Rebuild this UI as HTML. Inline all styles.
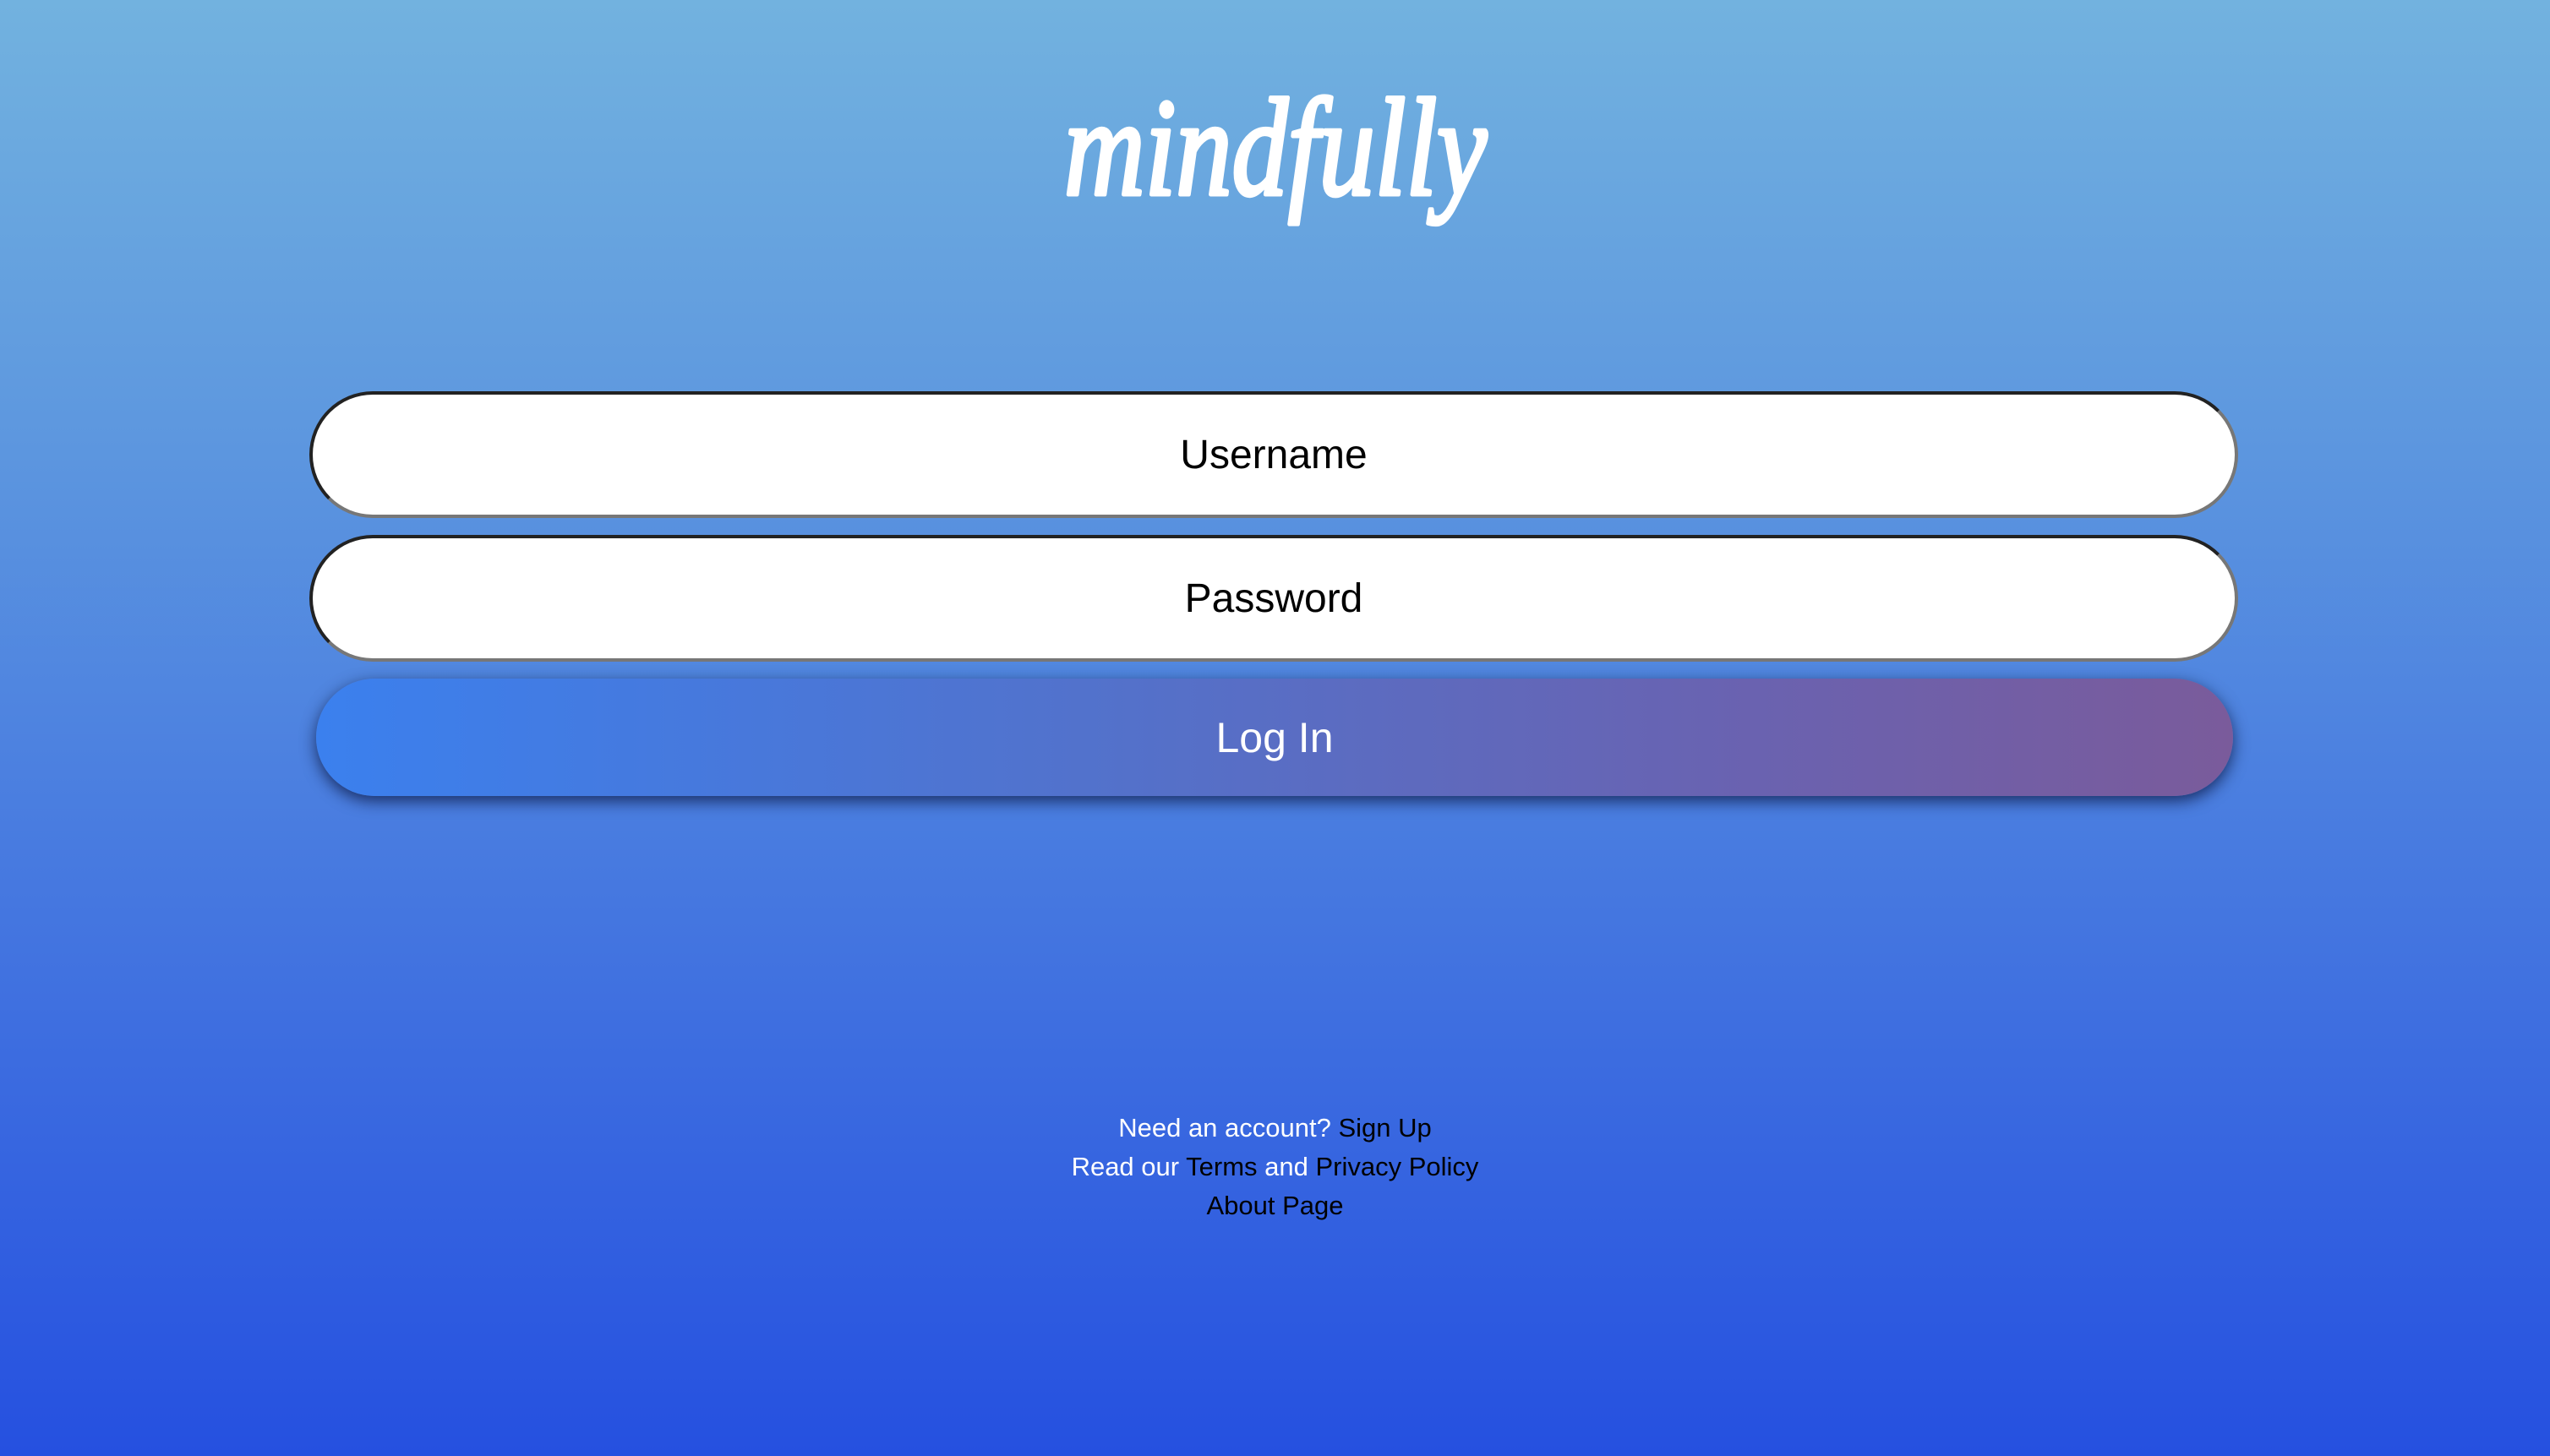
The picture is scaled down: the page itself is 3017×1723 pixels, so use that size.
<!DOCTYPE html>
<html><head><meta charset="utf-8"><style>
html,body{margin:0;padding:0;width:3017px;height:1723px;overflow:hidden}
body{background:linear-gradient(180deg,#72b2df 0%,#5d97df 30%,#4577e0 62%,#2550e0 100%);font-family:"Liberation Sans",sans-serif;position:relative}
.logo{position:absolute;left:0;top:60px;width:3017px;text-align:center}
.inp{position:absolute;left:366px;width:2282px;height:150px;box-sizing:border-box;background:#fff;border-radius:75px;border:4px solid;border-color:#222 #777 #777 #222;display:flex;align-items:center;justify-content:center;font-size:48px;color:#000}
.btn{position:absolute;left:374px;top:803px;width:2268px;height:139px;border-radius:70px;background:linear-gradient(90deg,#3b80ee,#5272cc 40%,#6a62b0 75%,#7a5b9b);box-shadow:0 6px 18px rgba(10,20,60,.75);display:flex;align-items:center;justify-content:center;color:#fff;font-size:50px}
.foot{position:absolute;left:0;width:3017px;top:1312px;text-align:center;color:#fff;font-size:31px;line-height:46px}
.foot span{color:#000}
</style></head><body>
<div class="logo"><svg width="700" height="270" viewBox="0 0 700 270"><text x="350" y="170" text-anchor="middle" font-family="Liberation Serif, serif" font-style="italic" font-size="165" fill="#fff" stroke="#fff" stroke-width="5" stroke-linejoin="round" textLength="500" lengthAdjust="spacingAndGlyphs">mindfully</text></svg></div>
<div class="inp" style="top:463px">Username</div>
<div class="inp" style="top:633px">Password</div>
<div class="btn">Log In</div>
<div class="foot">Need an account? <span>Sign Up</span><br>Read our <span>Terms</span> and <span>Privacy Policy</span><br><span>About Page</span></div>
</body></html>
